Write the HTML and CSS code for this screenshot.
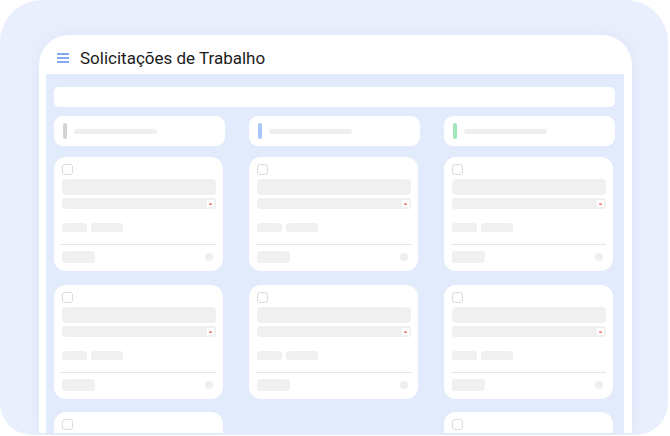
FILE: index.html
```html
<!DOCTYPE html>
<html lang="pt">
<head>
    <meta charset="UTF-8">
    <meta name="viewport" content="width=device-width, initial-scale=1.0">
    <title>Solicitações de Trabalho</title>
    <link rel="stylesheet" href="styles.css">
</head>
<body>
    <div class="frame">
        <div class="window">
            <div class="header">
                <svg class="menu-icon" width="12" height="10" viewBox="0 0 12 10">
                    <path d="M0.5 1h11M0.5 5h11M0.5 9h11" stroke="#5b8def" stroke-width="1.6" stroke-linecap="round"/>
                </svg>
                <h1>Solicitações de Trabalho</h1>
            </div>

            <div class="board">
                <div class="search"></div>

                <div class="columns">
                    <div class="column">
                        <div class="column-head"><span class="pill grey"></span><span class="head-line"></span></div>
                        <div class="card">
                            <span class="check"></span>
                            <div class="bar-lg"></div>
                            <div class="bar-sm"><span class="flag"></span></div>
                            <div class="tags"><span class="tag"></span><span class="tag wide"></span></div>
                            <div class="divider"></div>
                            <div class="foot"><span class="foot-box"></span><span class="dot"></span></div>
                        </div>
                        <div class="card">
                            <span class="check"></span>
                            <div class="bar-lg"></div>
                            <div class="bar-sm"><span class="flag"></span></div>
                            <div class="tags"><span class="tag"></span><span class="tag wide"></span></div>
                            <div class="divider"></div>
                            <div class="foot"><span class="foot-box"></span><span class="dot"></span></div>
                        </div>
                        <div class="card">
                            <span class="check"></span>
                            <div class="bar-lg"></div>
                            <div class="bar-sm"><span class="flag"></span></div>
                        </div>
                    </div>

                    <div class="column">
                        <div class="column-head"><span class="pill blue"></span><span class="head-line"></span></div>
                        <div class="card">
                            <span class="check"></span>
                            <div class="bar-lg"></div>
                            <div class="bar-sm"><span class="flag"></span></div>
                            <div class="tags"><span class="tag"></span><span class="tag wide"></span></div>
                            <div class="divider"></div>
                            <div class="foot"><span class="foot-box"></span><span class="dot"></span></div>
                        </div>
                        <div class="card later">
                            <span class="check"></span>
                            <div class="bar-lg"></div>
                            <div class="bar-sm"><span class="flag"></span></div>
                            <div class="tags"><span class="tag"></span><span class="tag wide"></span></div>
                            <div class="divider"></div>
                            <div class="foot"><span class="foot-box"></span><span class="dot"></span></div>
                        </div>
                    </div>

                    <div class="column">
                        <div class="column-head"><span class="pill green"></span><span class="head-line"></span></div>
                        <div class="card">
                            <span class="check"></span>
                            <div class="bar-lg"></div>
                            <div class="bar-sm"><span class="flag"></span></div>
                            <div class="tags"><span class="tag"></span><span class="tag wide"></span></div>
                            <div class="divider"></div>
                            <div class="foot"><span class="foot-box"></span><span class="dot"></span></div>
                        </div>
                        <div class="card later-sm">
                            <span class="check"></span>
                            <div class="bar-lg"></div>
                            <div class="bar-sm"><span class="flag"></span></div>
                            <div class="tags"><span class="tag"></span><span class="tag wide"></span></div>
                            <div class="divider"></div>
                            <div class="foot"><span class="foot-box"></span><span class="dot"></span></div>
                        </div>
                        <div class="card">
                            <span class="check"></span>
                            <div class="bar-lg"></div>
                            <div class="bar-sm"><span class="flag"></span></div>
                        </div>
                    </div>
                </div>
            </div>
        </div>
    </div>
</body>
</html>
```

FILE: styles.css
```css
body {
    margin: 0;
    background-color: #ffffff;
    font-family: Roboto, "Liberation Sans", sans-serif;
}

.frame {
    width: 668px;
    height: 435px;
    box-sizing: border-box;
    padding: 35px 36px 0 39px;
    background-color: #e9effc;
    border-radius: 42px 42px 32px 32px;
    overflow: hidden;
}

.window {
    height: 398px;
    background-color: #ffffff;
    border-radius: 30px 30px 0 0;
    padding: 0 8px 0 7px;
    overflow: hidden;
    box-shadow: 0 0 18px rgba(90, 120, 210, 0.08);
}

.header {
    height: 33px;
    padding-top: 6px;
    display: flex;
    align-items: center;
    padding-left: 11px;
}

.menu-icon {
    margin-right: 11px;
    margin-top: 1px;
}

.header h1 {
    margin: 0;
    font-size: 17px;
    font-weight: 400;
    color: #1b1b1b;
}

.board {
    background-color: #e2ebfc;
    padding: 13px 9px 0 8px;
    height: 400px;
}

.search {
    height: 20px;
    background-color: #ffffff;
    border-radius: 5px;
}

.columns {
    display: grid;
    grid-template-columns: 1fr 1fr 1fr;
    column-gap: 24px;
    margin-top: 9px;
}

.column-head {
    height: 30px;
    background-color: #ffffff;
    border-radius: 9px;
    display: flex;
    align-items: center;
    padding-left: 9px;
}

.pill {
    width: 4px;
    height: 16px;
    border-radius: 2px;
}

.pill.grey { background-color: #d3d3d3; }
.pill.blue { background-color: #a9c5fa; }
.pill.green { background-color: #9fe6b8; }

.head-line {
    width: 83px;
    height: 5px;
    border-radius: 3px;
    background-color: #efefef;
    margin-left: 7px;
}

.card {
    margin-top: 11px;
    margin-right: 2px;
    margin-bottom: 13.5px;
    background-color: #ffffff;
    border-radius: 12px;
    padding: 7px 7px 8px 8px;
}

.card + .card {
    margin-top: 0;
}

.card.later {
    margin-top: 2px;
}

.card.later-sm {
    margin-top: 1px;
}

.check {
    display: block;
    width: 9px;
    height: 9px;
    border: 1.5px solid #dcdcdc;
    border-radius: 3px;
}

.bar-lg {
    margin-top: 4px;
    height: 16px;
    border-radius: 4px;
    background-color: #f0f0f0;
}

.bar-sm {
    margin-top: 3px;
    height: 11px;
    border-radius: 3px;
    background-color: #f0f0f0;
    display: flex;
    justify-content: flex-end;
    align-items: center;
    padding-right: 2px;
}

.flag {
    width: 7px;
    height: 7px;
    border-radius: 1px;
    background-color: #ffffff;
    position: relative;
}

.flag::after {
    content: "";
    position: absolute;
    left: 2px;
    top: 3px;
    width: 3px;
    height: 2px;
    background-color: #f27b7b;
    border-radius: 2px 2px 0 0;
}

.tags {
    margin-top: 14px;
    display: flex;
    gap: 4px;
}

.tag {
    width: 25px;
    height: 9px;
    border-radius: 3px;
    background-color: #f0f0f0;
}

.tag.wide {
    width: 32px;
}

.divider {
    margin-top: 12px;
    margin-left: -1px;
    height: 1px;
    background-color: #e6e6e6;
}

.foot {
    margin-top: 6px;
    display: flex;
    justify-content: space-between;
    align-items: center;
}

.foot-box {
    width: 33px;
    height: 12px;
    border-radius: 3px;
    background-color: #f0f0f0;
}

.dot {
    width: 8px;
    height: 8px;
    border-radius: 50%;
    background-color: #efefef;
    margin-right: 3px;
}
```
